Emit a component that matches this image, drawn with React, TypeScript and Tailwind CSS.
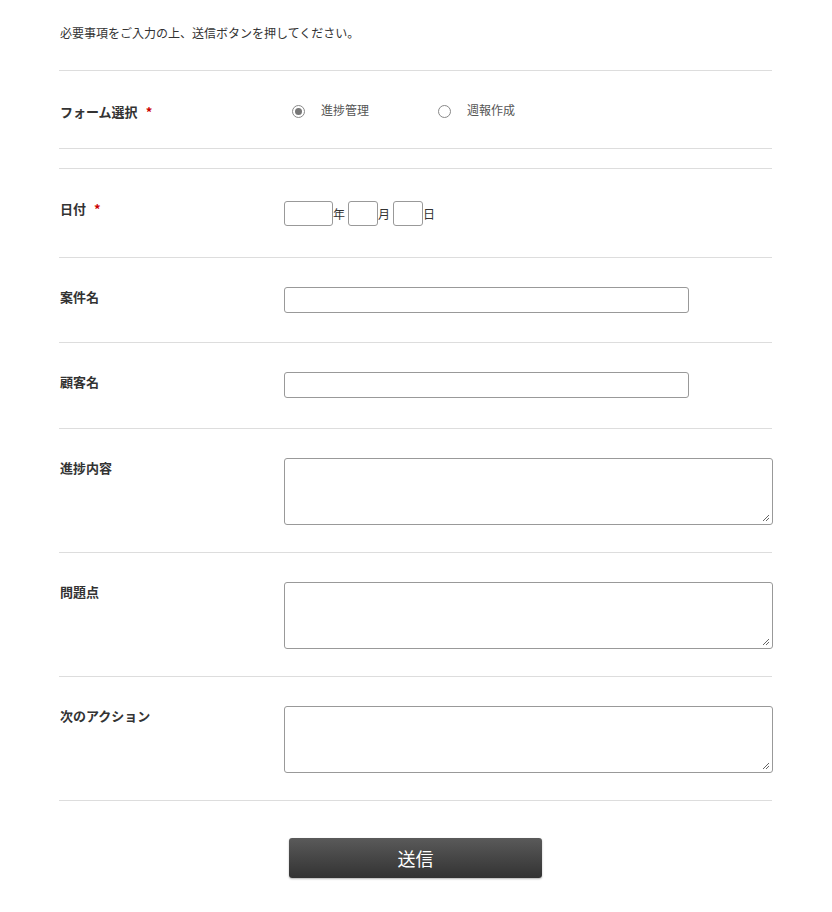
import React from "react";

const font = { fontFamily: '"Noto Sans CJK JP", "Noto Sans", sans-serif' };

function Req() {
  return <span className="ml-[8px] text-[#cc0000] font-bold">*</span>;
}

function Row({ label, req, children, pt = "pt-[29px]", pb = "pb-[29px]" }: { label: string; req?: boolean; children: React.ReactNode; pt?: string; pb?: string }) {
  return (
    <div className={`flex border-t border-[#dddddd] ${pt} ${pb}`}>
      <div className="w-[225px] shrink-0 pl-[1px] text-[13px] font-bold leading-[20px] text-[#333] pt-[0px]">
        {label}
        {req && <Req />}
      </div>
      <div className="flex-1">{children}</div>
    </div>
  );
}

function Resize() {
  return (
    <svg className="absolute right-[2px] bottom-[2px]" width="8" height="8" viewBox="0 0 8 8">
      <line x1="1" y1="7" x2="7" y2="1" stroke="#666" strokeWidth="1" />
      <line x1="4" y1="7" x2="7" y2="4" stroke="#666" strokeWidth="1" />
    </svg>
  );
}

function TA() {
  return (
    <div className="relative w-[489px] h-[67px] border border-[#999] rounded-[3px] bg-white">
      <Resize />
    </div>
  );
}

function Radio({ checked }: { checked?: boolean }) {
  return (
    <span className="w-[13px] h-[13px] rounded-full border border-[#888] bg-white flex items-center justify-center">
      {checked && <span className="w-[7px] h-[7px] rounded-full bg-[#777]" />}
    </span>
  );
}

export default function App() {
  return (
    <div className="w-full bg-white" style={font}>
      <div className="w-[713px] ml-[59px] pt-[23px] text-[#333]">
        <p className="text-[12px] leading-[20px] pl-[1px] mb-[27px]">必要事項をご入力の上、送信ボタンを押してください。</p>

        <div className="flex border-t border-[#dddddd] pt-[30px] pb-[26px]">
          <div className="w-[225px] shrink-0 pl-[1px] text-[13px] font-bold leading-[20px] pt-[1px]">
            フォーム選択
            <Req />
          </div>
          <div className="flex items-center text-[12px] text-[#555] leading-[20px] -mt-[1px]">
            <div className="flex items-center ml-[8px]">
              <Radio checked />
              <span className="ml-[16px] -mt-[3px]">進捗管理</span>
            </div>
            <div className="flex items-center ml-[69px]">
              <Radio />
              <span className="ml-[16px] -mt-[3px]">週報作成</span>
            </div>
          </div>
        </div>
        <div className="h-[20px] border-t border-[#dddddd]" />

        <Row label="日付" req pt="pt-[30px]" pb="pb-[31px]">
          <div className="flex items-center text-[12px] leading-[20px] text-[#333] pt-[2px]">
            <span className="w-[49px] h-[25px] border border-[#999] rounded-[3px]" />
            <span className="w-[15px]">年</span>
            <span className="w-[30px] h-[25px] border border-[#999] rounded-[3px]" />
            <span className="w-[15px]">月</span>
            <span className="w-[30px] h-[25px] border border-[#999] rounded-[3px]" />
            <span>日</span>
          </div>
        </Row>

        <Row label="案件名">
          <div className="w-[405px] h-[26px] border border-[#999] rounded-[3px]" />
        </Row>
        <Row label="顧客名" pb="pb-[30px]">
          <div className="w-[405px] h-[26px] border border-[#999] rounded-[3px]" />
        </Row>
        <Row label="進捗内容" pb="pb-[27px]">
          <TA />
        </Row>
        <Row label="問題点" pb="pb-[27px]">
          <TA />
        </Row>
        <Row label="次のアクション" pb="pb-[27px]">
          <TA />
        </Row>

        <div className="border-t border-[#dddddd] pt-[37px] pb-[34px] flex">
          <div className="ml-[230px] w-[253px] h-[40px] rounded-[3px] bg-gradient-to-b from-[#5a5a5a] to-[#333333] shadow-[0_1px_2px_rgba(0,0,0,0.3)] flex items-center justify-center text-white text-[18px]">
            送信
          </div>
        </div>
      </div>
    </div>
  );
}
